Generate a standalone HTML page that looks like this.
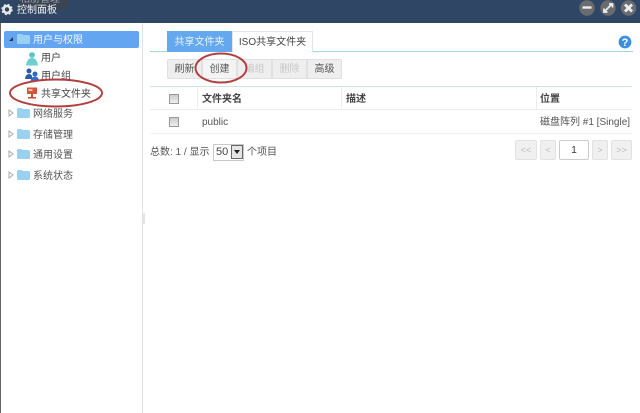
<!DOCTYPE html>
<html><head><meta charset="utf-8"><style>
*{box-sizing:border-box}
html,body{margin:0;padding:0;background:#fff;width:640px;height:413px;overflow:hidden}
body{font-family:"Liberation Sans","Noto Sans CJK SC",sans-serif;font-size:10px;color:#444;position:relative}
#w{position:absolute;left:0;top:0;width:640px;height:413px;filter:blur(.35px);background:#fff}
.a{position:absolute;white-space:nowrap;line-height:12px}
.btn{position:absolute;top:59px;height:20px;background:#eeeeee;border:1px solid #e0e0e0;text-align:center;line-height:20px;font-size:10px;color:#555}
.pg{position:absolute;top:140px;height:20px;background:#f0f0f0;border:1px solid #e2e2e2;border-radius:2px;color:#bbb;text-align:center;line-height:19px;font-size:9px}
.cb{position:absolute;width:10px;height:10px;background:linear-gradient(#ccc,#eee);border:1px solid #999}
</style></head><body><div id="w">
<div style="position:absolute;left:0;top:0;width:640px;height:23px;background:#2f4765"></div>
<div style="position:absolute;left:19px;top:0;width:49px;height:9px;background:#3a4452"></div>
<div class="a" style="left:20px;top:-6px;color:#9aa3ab;font-size:10px">相册管理</div>
<svg style="position:absolute;left:1px;top:3px" width="12" height="13" viewBox="0 0 12 13"><circle cx="6" cy="6.500" r="3.500" fill="none" stroke="#e8e8e8" stroke-width="2.600"/><circle cx="6" cy="6.500" r="5" fill="none" stroke="#e8e8e8" stroke-width="1.400" stroke-dasharray="2 2"/></svg>
<div class="a" style="left:17px;top:4px;color:#f2f2f2;font-size:10px;line-height:14px">控制面板</div>
<svg style="position:absolute;left:576px;top:0" width="64" height="20" viewBox="0 0 64 20">
<circle cx="11" cy="8" r="7.700" fill="#6a6c70"/><circle cx="32" cy="8" r="7.700" fill="#6a6c70"/><circle cx="52.500" cy="8" r="7.700" fill="#6a6c70"/>
<path d="M6.500 7.500h9" stroke="#eee" stroke-width="2.400"/>
<path d="M28 12l8-8M33 4h3.500v3.500M28 8.500V12h3.500" stroke="#eee" stroke-width="1.700" fill="none"/>
<path d="M49 4.500l7 7M56 4.500l-7 7" stroke="#eee" stroke-width="2.800"/></svg>
<div style="position:absolute;left:0;top:23px;width:1px;height:390px;background:#666"></div>
<div style="position:absolute;left:142px;top:23px;width:1px;height:390px;background:#e2e2e2"></div>
<div style="position:absolute;left:143px;top:213px;width:2px;height:11px;background:#e4e4e4"></div>

<div style="position:absolute;left:4px;top:31px;width:135px;height:17px;background:#64a5f2;border-radius:2px"></div>
<svg style="position:absolute;left:8px;top:36px" width="6" height="6"><path d="M1 5h4V1z" fill="#2b3a4a"/></svg>
<svg style="position:absolute;left:17px;top:34px" width="13" height="10"><path d="M0 1.500q0-1.500 1.500-1.500h3l1.500 1h5.500q1.500 0 1.500 1.500v6q0 1.500-1.500 1.500h-10q-1.500 0-1.500-1.500z" fill="#9bd0f2"/></svg>
<div class="a" style="left:33px;top:34px;color:#f4f8fd;font-size:10px;line-height:13px">用户与权限</div>

<svg style="position:absolute;left:25px;top:52px" width="14" height="14"><circle cx="7" cy="3" r="2.900" fill="#5bc4c4"/><path d="M1 13.500q1-7.500 6-7.500t6 7.500z" fill="#6fcfd0"/></svg>
<div class="a" style="left:41px;top:52px;line-height:13px">用户</div>
<svg style="position:absolute;left:25px;top:68px" width="14" height="14"><circle cx="4" cy="3" r="2.500" fill="#2c5aa8"/><circle cx="10" cy="6" r="2.500" fill="#2c68c4"/><path d="M0 11q.5-5 4-5t3 4v1z" fill="#2c5aa8"/><path d="M5.500 13.500q.5-5 4.500-5t4 5z" fill="#3070cc"/></svg>
<div class="a" style="left:41px;top:70px;line-height:13px">用户组</div>
<svg style="position:absolute;left:26px;top:87px" width="12" height="12"><rect x="1" y="0.500" width="10" height="6.500" fill="#d4563a"/><rect x="2.500" y="2" width="4" height="2" fill="#f0c0a0"/><rect x="5" y="7" width="2" height="3" fill="#c84a30"/><rect x="2" y="10" width="8" height="1.500" fill="#c84a30"/></svg>
<div class="a" style="left:41px;top:88px;line-height:13px">共享文件夹</div>

<svg style="position:absolute;left:8px;top:109px" width="7" height="78" fill="#fff" stroke="#aaa"><path d="M1 1l4 3-4 3zM1 22l4 3-4 3zM1 42l4 3-4 3zM1 63l4 3-4 3z"/></svg>
<svg style="position:absolute;left:17px;top:108px" width="13" height="73" fill="#9ad1f0"><path d="M0 1.500q0-1.500 1.500-1.500h3l1.500 1h5.500q1.500 0 1.500 1.500v6q0 1.500-1.500 1.500h-10q-1.500 0-1.500-1.500z"/><path d="M0 22.500q0-1.500 1.500-1.500h3l1.500 1h5.500q1.500 0 1.500 1.500v6q0 1.500-1.500 1.500h-10q-1.500 0-1.500-1.500z"/><path d="M0 42.500q0-1.500 1.500-1.500h3l1.500 1h5.500q1.500 0 1.500 1.500v6q0 1.500-1.500 1.500h-10q-1.500 0-1.500-1.500z"/><path d="M0 63.500q0-1.500 1.500-1.500h3l1.500 1h5.500q1.500 0 1.500 1.500v6q0 1.500-1.500 1.500h-10q-1.500 0-1.500-1.500z"/></svg>
<div class="a" style="left:33px;top:108px;line-height:13px;color:#555">网络服务</div>
<div class="a" style="left:33px;top:129px;line-height:13px;color:#555">存储管理</div>
<div class="a" style="left:33px;top:149px;line-height:13px;color:#555">通用设置</div>
<div class="a" style="left:33px;top:170px;line-height:13px;color:#555">系统状态</div>

<div style="position:absolute;left:150px;top:51px;width:483px;height:1px;background:#a8d8c8"></div>
<div style="position:absolute;left:167px;top:31px;width:65px;height:21px;background:#64a9f0;color:#e8f3fc;text-align:center;line-height:23px">共享文件夹</div>
<div style="position:absolute;left:232px;top:31px;width:81px;height:21px;background:#fff;border:1px solid #e4e4e4;border-bottom:0;text-align:center;line-height:21px;color:#444">ISO共享文件夹</div>
<svg style="position:absolute;left:618px;top:35px" width="14" height="14"><circle cx="7" cy="7" r="6.400" fill="#3f8fe0"/><text x="7" y="11" text-anchor="middle" fill="#fff" font-family="Liberation Sans" font-weight="bold" font-size="11">?</text></svg>

<div class="btn" style="left:167px;width:35px;border-radius:2px 0 0 2px">刷新</div>
<div class="btn" style="left:202px;width:35px;background:#f4f4f4">创建</div>
<div class="btn" style="left:237px;width:35px;color:#c8c8c8">编组</div>
<div class="btn" style="left:272px;width:35px;color:#c8c8c8">删除</div>
<div class="btn" style="left:307px;width:35px;border-radius:0 2px 2px 0">高级</div>

<div style="position:absolute;left:150px;top:86px;width:482px;height:1px;background:#cfe5e3"></div>
<div style="position:absolute;left:150px;top:109px;width:482px;height:1px;background:#ececec"></div>
<div style="position:absolute;left:150px;top:133px;width:482px;height:1px;background:#f2f2f2"></div>
<div style="position:absolute;left:197px;top:87px;width:1px;height:22px;background:#ececec"></div>
<div style="position:absolute;left:341px;top:87px;width:1px;height:22px;background:#ececec"></div>
<div style="position:absolute;left:536px;top:87px;width:1px;height:22px;background:#ececec"></div>
<div class="cb" style="left:169px;top:94px"></div>
<div class="cb" style="left:169px;top:117px"></div>
<div class="a" style="left:202px;top:94px;font-weight:bold;color:#444">文件夹名</div>
<div class="a" style="left:346px;top:94px;font-weight:bold;color:#444">描述</div>
<div class="a" style="left:540px;top:94px;font-weight:bold;color:#444">位置</div>
<div class="a" style="left:202px;top:117px;color:#555">public</div>
<div class="a" style="left:540px;top:117px;color:#555">磁盘阵列 #1 [Single]</div>

<div class="a" style="left:150px;top:147px;color:#555">总数: 1 / 显示</div>
<div style="position:absolute;left:213px;top:144px;width:31px;height:17px;background:#fff;border:1px solid #c8c8c8;line-height:15px;padding-left:2px;color:#444;font-size:11px">50</div>
<div style="position:absolute;left:231px;top:145px;width:12px;height:14px;background:#e4e4e4;border:1px solid #666"></div>
<svg style="position:absolute;left:234px;top:150px" width="6" height="4"><path d="M0 0h6L3 4z" fill="#222"/></svg>
<div class="a" style="left:247px;top:147px;color:#555">个项目</div>

<div class="pg" style="left:515px;width:22px">&lt;&lt;</div>
<div class="pg" style="left:540px;width:16px">&lt;</div>
<div class="pg" style="left:559px;width:30px;background:#fff;border-color:#ccc;color:#333;font-size:10px">1</div>
<div class="pg" style="left:592px;width:16px">&gt;</div>
<div class="pg" style="left:611px;width:21px">&gt;&gt;</div>

<svg style="position:absolute;left:0;top:0;pointer-events:none" width="640" height="413" fill="none" stroke="#b0403f" stroke-width="1.900">
<ellipse cx="56" cy="93" rx="46" ry="13.500"/>
<ellipse cx="221" cy="68" rx="25.500" ry="14.500"/>
</svg>
</div></body></html>
